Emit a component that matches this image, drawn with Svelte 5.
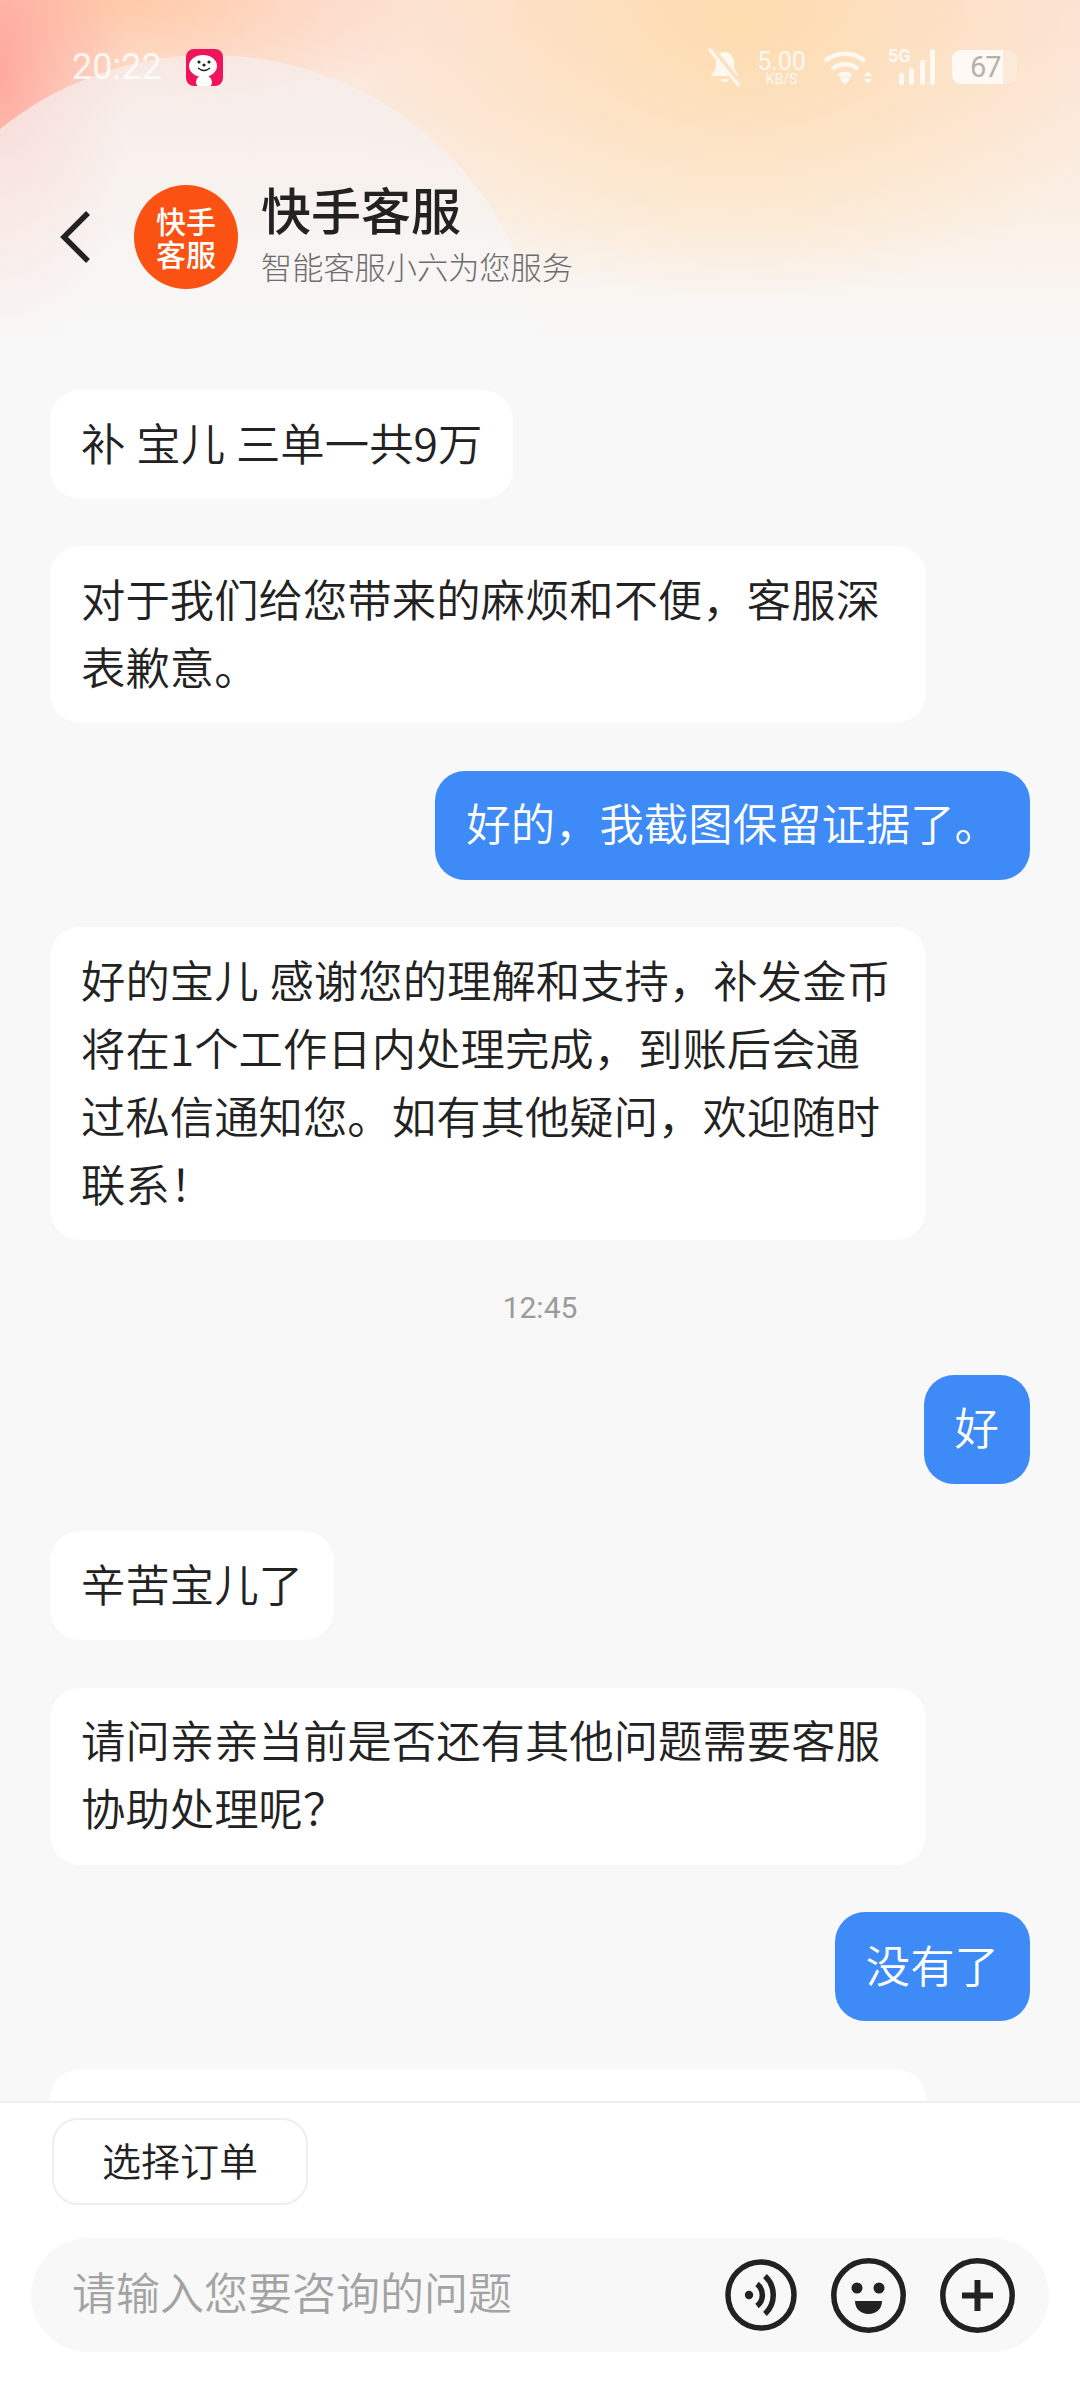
<script>
  const messages = [
    { from: 'them', lines: ['补 宝儿 三单一共9万'] },
    { from: 'them', wide: true, lines: ['对于我们给您带来的麻烦和不便，客服深', '表歉意。'] },
    { from: 'me', lines: ['好的，我截图保留证据了。'] },
    { from: 'them', wide: true, lines: ['好的宝儿 感谢您的理解和支持，补发金币', '将在1个工作日内处理完成，到账后会通', '过私信通知您。如有其他疑问，欢迎随时', '联系！'] },
    { time: '12:45' },
    { from: 'me', lines: ['好'] },
    { from: 'them', lines: ['辛苦宝儿了'] },
    { from: 'them', wide: true, lines: ['请问亲亲当前是否还有其他问题需要客服', '协助处理呢？'] },
    { from: 'me', lines: ['没有了'] },
    { from: 'them', wide: true, lines: [''] }
  ];

  const bars = [12, 17, 25, 36];
</script>

<div class="page">
  <div class="top">
    <div class="blob"></div>
    <div class="status">
      <div class="status-left">
        <span class="clock">20:22</span>
        <svg class="app-icon" width="37" height="37" viewBox="0 0 37 37">
          <rect width="37" height="37" rx="8" fill="#f0155a" />
          <ellipse cx="18" cy="33" rx="8" ry="7" fill="#fff" />
          <ellipse cx="17" cy="17" rx="14" ry="11" fill="#fff" />
          <circle cx="13" cy="13" r="1.6" fill="#222" />
          <circle cx="23" cy="13" r="1.6" fill="#222" />
          <circle cx="18" cy="16" r="1.6" fill="#222" />
          <path d="M12 19q6 5 12 0" fill="none" stroke="#222" stroke-width="1.3" />
        </svg>
      </div>
      <div class="status-right">
        <svg class="bell" width="36" height="38" viewBox="0 0 36 38">
          <path d="M18 4c7 0 9 6 9 12 0 5 2 8 5 12H4c3-4 5-7 5-12 0-6 2-12 9-12z" fill="#fff" />
          <path d="M14 31a4 3 0 0 0 8 0z" fill="#fff" />
          <path d="M4 0l30 37" stroke="#fce3c8" stroke-width="6" />
          <path d="M2 1l30 37" stroke="#fff" stroke-width="3" />
        </svg>
        <div class="speed"><span>5.00</span><small>KB/S</small></div>
        <svg class="wifi" width="49" height="36" viewBox="0 0 49 36">
          <path d="M2 12a31 31 0 0 1 40 0M9 20a20 20 0 0 1 26 0M16 27a9 9 0 0 1 12 0" fill="none" stroke="#fff" stroke-width="4.5" />
          <path d="M17 30l5-3 5 3-5 6z" fill="#fff" />
          <path d="M45 22l4 5h-8zM45 35l4-5h-8z" fill="#fff" />
        </svg>
        <div class="signal">
          <span class="five-g">5G</span>
          {#each bars as h}
            <i style="height: {h}px"></i>
          {/each}
        </div>
        <div class="battery"><span class="battery-fill"></span><b>67</b></div>
      </div>
    </div>

    <header class="head">
      <svg class="back" width="34" height="58" viewBox="0 0 34 58">
        <path d="M30 5L6 29l24 24" fill="none" stroke="#222" stroke-width="5.5" />
      </svg>
      <div class="avatar">快手<br />客服</div>
      <div class="head-text">
        <h1>快手客服</h1>
        <p>智能客服小六为您服务</p>
      </div>
    </header>
  </div>

  <main class="chat">
    {#each messages as m}
      {#if m.time}
        <div class="time">{m.time}</div>
      {:else}
        <div class="row {m.from}">
          <div class="bubble {m.from}" class:wide={m.wide}>
            {#each m.lines as line}
              <div class="line">{line}</div>
            {/each}
          </div>
        </div>
      {/if}
    {/each}
  </main>

  <footer class="bottom">
    <div class="chips"><button class="chip">选择订单</button></div>
    <div class="input">
      <span class="placeholder">请输入您要咨询的问题</span>
      <div class="tools">
        <svg width="72" height="72" viewBox="0 0 72 72">
          <circle cx="36" cy="36" r="33" fill="none" stroke="#222" stroke-width="5.5" />
          <circle cx="24" cy="36" r="4.2" fill="#222" />
          <path d="M32 25a14 14 0 0 1 0 22" fill="none" stroke="#222" stroke-width="5.5" />
          <path d="M40 17a26 26 0 0 1 0 38" fill="none" stroke="#222" stroke-width="5.5" />
        </svg>
        <svg width="75" height="75" viewBox="0 0 75 75">
          <circle cx="37.5" cy="37.5" r="34.7" fill="none" stroke="#222" stroke-width="5.5" />
          <circle cx="26" cy="30" r="5.5" fill="#222" />
          <circle cx="48" cy="30" r="5.5" fill="#222" />
          <path d="M24 43h27c0 8-6 13-13.500 13S24 51 24 43z" fill="#222" />
        </svg>
        <svg width="75" height="75" viewBox="0 0 75 75">
          <circle cx="37.5" cy="37.5" r="34.7" fill="none" stroke="#222" stroke-width="5.5" />
          <path d="M37.5 22v31M22 37.5h31" fill="none" stroke="#222" stroke-width="6" />
        </svg>
      </div>
    </div>
  </footer>
</div>

<style>
  :global(body) {
    margin: 0;
    background: #f8f8f8;
  }

  .page {
    width: 1080px;
    height: 2392px;
    display: flex;
    flex-direction: column;
    overflow: hidden;
    position: relative;
    background: #f8f8f8;
    font-family: "Noto Sans CJK SC", "Noto Sans", sans-serif;
    color: #222;
  }

  .top {
    height: 342px;
    flex: none;
    position: relative;
    overflow: hidden;
    background:
      radial-gradient(ellipse 130px 300px at 0 70px, #ffa99c 0%, rgba(255, 170, 156, 0) 100%),
      radial-gradient(ellipse 300px 120px at 130px 0, #ffcaa8 0%, rgba(255, 202, 168, 0) 100%),
      radial-gradient(ellipse 420px 280px at 740px 20px, #fddcae 0%, rgba(253, 220, 174, 0) 100%),
      linear-gradient(180deg, #fce4dc 0%, #fbefe4 60%, #f8f8f8 100%);
  }

  .blob {
    position: absolute;
    left: -125px;
    top: 55px;
    width: 670px;
    height: 670px;
    border-radius: 50%;
    background: linear-gradient(180deg, rgba(245, 238, 238, 0.7), rgba(248, 248, 248, 0.75) 40%);
  }

  .status {
    position: relative;
    height: 130px;
    padding: 48px 63px 0 72px;
    box-sizing: border-box;
    display: flex;
    justify-content: space-between;
    align-items: flex-start;
    color: #fff;
  }

  .status-left {
    display: flex;
    align-items: center;
    gap: 24px;
    height: 38px;
  }

  .clock {
    font-family: "Roboto", sans-serif;
    font-size: 36px;
    opacity: 0.8;
  }

  .status-right {
    display: flex;
    align-items: center;
    height: 38px;
    opacity: 0.8;
  }

  .bell {
    margin-right: 15px;
  }

  .speed {
    width: 47px;
    margin-right: 18px;
    display: flex;
    flex-direction: column;
    align-items: center;
    font-family: "Roboto", sans-serif;
    line-height: 1;
  }

  .speed span {
    font-size: 25px;
    height: 23px;
  }

  .speed small {
    font-size: 14px;
  }

  .wifi {
    margin-right: 16px;
  }

  .signal {
    position: relative;
    width: 47px;
    height: 36px;
    margin-right: 17px;
    display: flex;
    justify-content: flex-end;
    align-items: flex-end;
    gap: 5.5px;
  }

  .signal i {
    width: 5px;
    background: #fff;
    border-radius: 2px;
  }

  .five-g {
    position: absolute;
    left: 0;
    top: -3px;
    font: 700 18px/19px "Roboto", sans-serif;
  }

  .battery {
    position: relative;
    width: 65px;
    height: 34px;
    border-radius: 9px;
    background: rgba(255, 255, 255, 0.3);
    overflow: hidden;
  }

  .battery-fill {
    position: absolute;
    left: 0;
    top: 0;
    bottom: 0;
    width: 51px;
    background: #fff;
  }

  .battery b {
    position: absolute;
    top: 0;
    left: 18px;
    width: 25px;
    text-align: center;
    font: 400 29px/34px "Roboto", sans-serif;
    letter-spacing: -1px;
    color: #a8a4a0;
  }

  .head {
    position: relative;
    display: flex;
    align-items: center;
    height: 104px;
    margin-top: 55px;
    padding-left: 58px;
  }

  .back {
    flex: none;
  }

  .avatar {
    width: 104px;
    height: 104px;
    flex: none;
    margin-left: 42px;
    border-radius: 50%;
    background: #fb5112;
    color: #fff;
    display: flex;
    flex-direction: column;
    align-items: center;
    justify-content: center;
    text-align: center;
    font-size: 30px;
    font-weight: 500;
    line-height: 33px;
  }

  .head-text {
    margin-left: 23px;
    padding-bottom: 9px;
  }

  h1 {
    margin: 0;
    font-size: 50px;
    font-weight: 500;
    line-height: 60px;
    color: #222;
  }

  .head-text p {
    margin: 7px 0 0;
    font-size: 31.2px;
    font-weight: 300;
    line-height: 42px;
    color: #6d6d6d;
  }

  .chat {
    flex: 1;
    min-height: 0;
    overflow: hidden;
    display: flex;
    flex-direction: column;
    padding: 48px 50px 0;
    gap: 47.4px;
  }

  .row {
    display: flex;
    flex: none;
  }

  .row.me {
    justify-content: flex-end;
  }

  .bubble {
    box-sizing: border-box;
    padding: 17.5px 31px 23.5px;
    border-radius: 30px;
    font-size: 44.4px;
    font-weight: 350;
    word-spacing: 1px;
    line-height: 68px;
    white-space: nowrap;
  }

  .bubble.them {
    background: #fff;
    color: #222;
  }

  .bubble.me {
    background: #3e8af6;
    color: #fff;
  }

  .bubble.wide {
    width: 876px;
  }

  .line {
    min-height: 68px;
  }

  .time {
    flex: none;
    text-align: center;
    font-family: "Roboto", sans-serif;
    font-size: 30px;
    line-height: 40px;
    color: #9b9b9b;
  }

  .bottom {
    flex: none;
    height: 291px;
    box-sizing: border-box;
    background: #fff;
    border-top: 2px solid #eeeeee;
  }

  .chips {
    padding: 15px 0 0 52px;
  }

  .chip {
    display: block;
    width: 256px;
    height: 87px;
    padding: 0 0 6px;
    border: 2px solid #eeeeee;
    border-radius: 26px;
    background: #fff;
    color: #222;
    font: 350 39px "Noto Sans CJK SC", sans-serif;
  }

  .input {
    display: flex;
    align-items: center;
    justify-content: space-between;
    width: 1018px;
    height: 114px;
    margin: 33px 0 0 31px;
    padding: 0 34px 0 41px;
    box-sizing: border-box;
    border-radius: 57px;
    background: #f8f8f8;
  }

  .placeholder {
    font-size: 44px;
    font-weight: 350;
    color: #a3a3a3;
    padding-bottom: 8px;
  }

  .tools {
    display: flex;
    align-items: center;
    gap: 34px;
  }
</style>
